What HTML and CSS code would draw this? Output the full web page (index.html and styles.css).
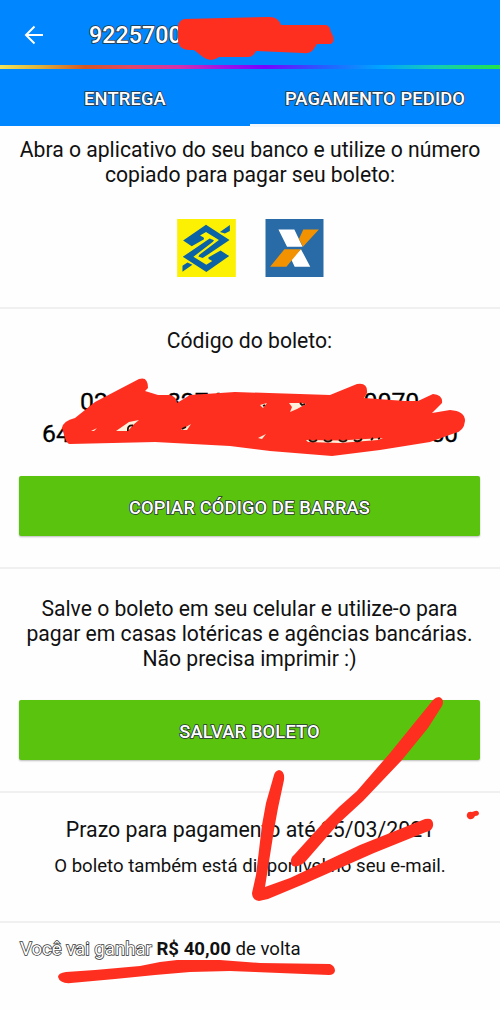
FILE: index.html
```html
<!DOCTYPE html>
<html lang="pt-BR">
<head>
<meta charset="utf-8">
<title>Pagamento pedido</title>
<link rel="stylesheet" href="styles.css">
</head>
<body>
<div class="screen">
  <header class="appbar">
    <svg class="back" viewBox="0 0 20 20"><path d="M19 10H2M10.500 1.500L2 10l8.500 8.500"/></svg>
    <h1 class="order">9225700</h1>
  </header>
  <div class="rainbow"></div>
  <nav class="tabs">
    <div class="tab"><span>ENTREGA</span></div>
    <div class="tab active"><span>PAGAMENTO PEDIDO</span></div>
  </nav>
  <section class="banks">
    <p class="body-text">Abra o aplicativo do seu banco e utilize o número<br>copiado para pagar seu boleto:</p>
    <div class="logos">
      <svg class="logo" viewBox="51 40 177 175">
        <path fill="#fcf003" d="M51 40h177v175H51z"/>
        <g fill="#0b62a4">
          <path id="ribbon" d="M69 105L138 57L209 103L128 158L115 153L118 148L177 103L138 79L120 90L131 96L132 101L95 122Z"/>
          <use href="#ribbon" transform="rotate(180 138.5 128.5)"/>
          <path d="M210 58V76L195 84L180 79ZM67 199V181L82 171L97 178Z"/>
        </g>
      </svg>
      <svg class="logo" viewBox="315 40 175 175">
        <path fill="#296ba6" d="M315 40h175v175H315z"/>
        <path fill="#fff" d="M354 72H402L427 124H380ZM422 131L450 184H403L392 161Z"/>
        <path fill="#f39200" d="M429 72H476L428 124L416 100ZM372 131H422L378 184H329Z"/>
      </svg>
    </div>
  </section>
  <section class="code">
    <p class="body-text">Código do boleto:</p>
    <div class="digits first"><span>02</span><span class="group-two">8274</span><span class="group-three">0</span><span>0070</span></div>
    <div class="digits second"><span>64</span><span>50</span></div>
    <button class="button">COPIAR CÓDIGO DE BARRAS</button>
  </section>
  <section class="save">
    <p class="body-text">Salve o boleto em seu celular e utilize-o para<br>pagar em casas lotéricas e agências bancárias.<br>Não precisa imprimir :)</p>
    <button class="button">SALVAR BOLETO</button>
  </section>
  <section class="due">
    <p class="body-text deadline">Prazo para pagamento até 25/03/2021</p>
    <p class="email">O boleto também está disponível no seu e-mail.</p>
  </section>
  <footer class="cashback"><span class="outlined">Você vai ganhar</span> <b>R$ 40,00</b> de volta</footer>
  <svg class="marker" viewBox="0 0 500 1010">
    <path d="M184 19L270 17Q278 17 281 25L326 25Q330 26 331 32L333 36Q335 42 331 44L317 44L313 50Q309 54 303 53L256 51Q253 57 248 57L219 57Q211 63 203 57L194 50Q178 51 178 40V27Q178 21 184 19Z"/>
    <path d="M62 428Q63 421 75 418L95 402L139 379Q148 376 148 388L145 391L158 395L170 395Q177 397 177 403L190 395L235 392L330 395L357 384Q368 382 367 393L364 398L405 401L418 401L433 394Q443 395 442 403L432 413L450 410Q465 411 465 421Q464 431 455 433L430 442L380 450L332 456L270 451L230 446L155 442L70 444Q67 444 65 438Z"/>
    <path d="M279 770Q285 771 284 780L278 808L274 830L265 887L290 878L360 845L425 819Q434 817 433 826Q432 831 426 832L374 853L304 884L268 899L259 901Q252 900 252 893L256 875L262 825L266 803L274 775Q275 771 279 770Z"/>
    <path d="M439 697Q445 699 442 706L428 728L402 760L363 801L338 824L305 862Q294 870 291 864Q290 858 294 855L323 823L339 807L357 791L390 753L433 700Q436 697 439 697Z"/>
    <path d="M467 814Q468 811 472 812L475 811Q478 810 479 813Q479 816 475 816Q473 820 469 819Q466 817 467 814Z"/>
    <path d="M66 972L95 970L140 966L160 962L177 960L220 960L260 963L330 964Q335 966 335 971Q334 975 329 975L255 972L230 971L190 972L155 975L115 979L71 983Q60 984 58 977Q58 973 66 972Z"/>
    <path class="gap" d="M116 431L129 422L139 420L133 425L128 431ZM181 430L191 424L187 430ZM260 405L267 403L263 408ZM289 403L301 403L306 404L297 409L290 412L292 407ZM258 438L266 434L262 439ZM91 431L97 428L94 431ZM306 440L340 440.500L383 438L378 440L340 443L308 442Z"/>
    <path class="ink" d="M128 431Q127 425 133 425.500M182 429L186 427M263 406L265 405M300 403L302 405L305 404M309 440Q313 443 317 440M324 440Q328 443 332 440M339 440Q343 443 347 440M354 440Q358 443 362 439M371 440L373 438M378 439L380 438"/>
  </svg>
</div>
</body>
</html>
```
FILE: styles.css
```css
* { box-sizing: border-box; }
body { margin: 0; background: #fff; font-family: Roboto, sans-serif; color: #111; }
.screen { position: relative; width: 500px; height: 1010px; overflow: hidden; background: #fefefe; }
.appbar { height: 65px; background: #0086ff; display: flex; align-items: center; padding: 5px 0 0 24px; }
.back { width: 20px; height: 20px; fill: none; stroke: #fff; stroke-width: 2; }
.order { margin: 0 0 0 45px; font-size: 23.3px; font-weight: 500; }
.order, .tab, .button { color: #fff; -webkit-text-stroke: 1.6px #29343c; paint-order: stroke fill; }
.rainbow { height: 4px; background: linear-gradient(90deg, #f3e45b 0, #ddb03b 8%, #d45622 17%, #e44665 26%, #d52fac 36%, #9c12e8 45%, #7604ff 53%, #265fff 65%, #00a4ff 76%, #14cdb4 87%, #22e448 100%); }
.tabs { height: 57px; display: grid; grid-template-columns: 1fr 1fr; background: #0086ff; }
.tab { text-align: center; font-size: 18.4px; line-height: 60px; font-weight: 500; letter-spacing: 0.1px; }
.tab.active { height: 58px; border-bottom: 3px solid #f2f7fb; background: #0086ff; }
section { border-bottom: 2px solid #f0f0f0; text-align: center; }
p { margin: 0; }
.body-text { font-size: 21.15px; line-height: 25px; }
.banks { height: 183px; padding-top: 11px; }
.logos { display: flex; justify-content: center; gap: 29px; margin-top: 32px; }
.logo { width: 59px; height: 58px; }
.code { height: 260px; padding: 19px 20px 0 19px; }
.digits { display: flex; font-size: 24.8px; line-height: 32px; color: #000; -webkit-text-stroke: 0.3px #000; }
.first { margin: 33px 0 0 61px; }
.group-two { margin-left: 59px; }
.group-three { margin: 0 18px 0 109px; }
.second { margin: 0 22px 0 23px; justify-content: space-between; }
.button { display: block; width: 461px; height: 60px; padding: 2px 0 0; border: 0; border-radius: 2px; background: #5ac30d; box-shadow: 0 1px 2px #bbb; font: 500 18.3px Roboto, sans-serif; letter-spacing: 0.15px; }
.code .button { margin-top: 26px; }
.save { height: 224px; padding: 27px 20px 0 19px; }
.save .button { margin-top: 29px; }
.due { height: 130px; padding-top: 24px; }
.deadline { font-size: 21.3px; }
.email { margin-top: 12px; font-size: 18.6px; line-height: 24px; }
.cashback { padding: 14px 20px; font-size: 18.6px; line-height: 24px; }
.outlined { color: #fff; -webkit-text-stroke: 1.5px #333; paint-order: stroke fill; }
.marker { position: absolute; left: 0; top: 0; width: 500px; height: 1010px; fill: #ff2f20; pointer-events: none; }
.gap { fill: #fff0dc; }
.ink { fill: none; stroke: #201008; stroke-width: 1.8; }
```
